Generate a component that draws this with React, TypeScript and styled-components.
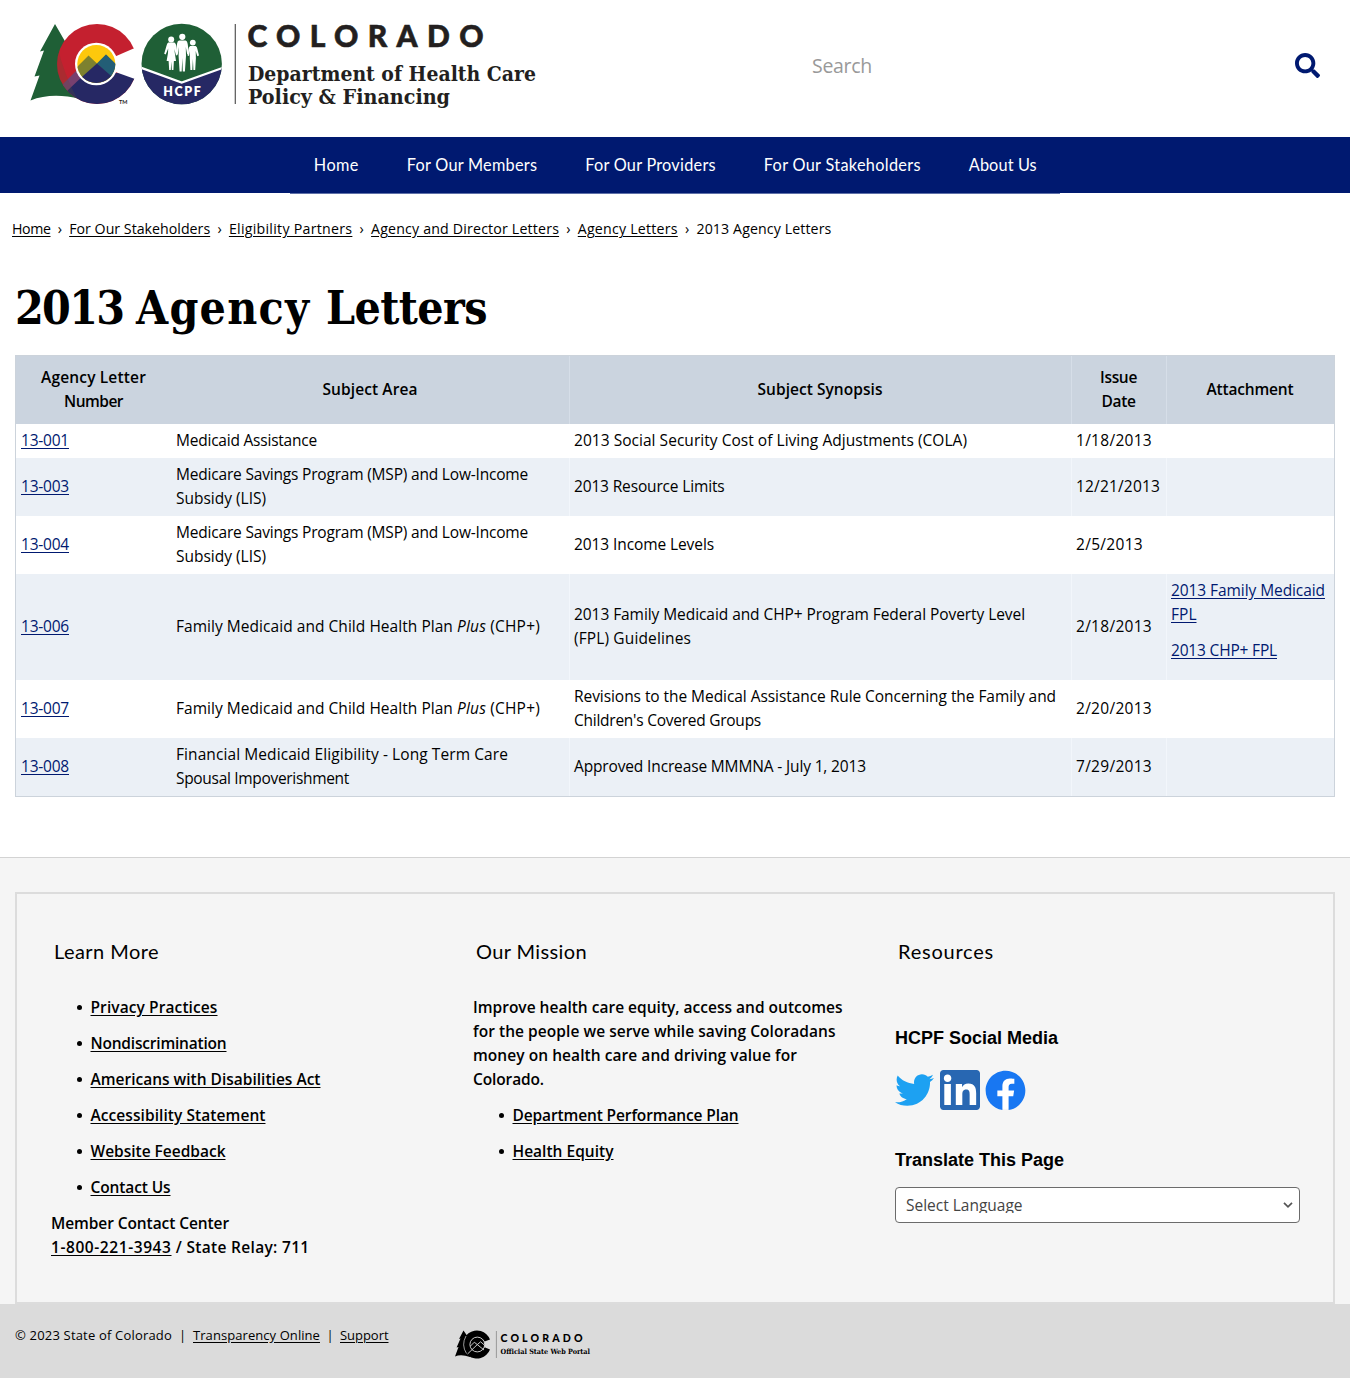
import React, { useLayoutEffect, useRef, useState } from "react";
import styled, { createGlobalStyle, css } from "styled-components";
import { FaFacebook, FaSearch, FaTwitter } from "react-icons/fa";

const sans = `"Open Sans", "Noto Sans", sans-serif`;
const lato = `Lato, "Open Sans", sans-serif`;
const slab = `"DejaVu Serif Condensed", "DejaVu Serif", serif`;
const navy = "#001970";

const Global = createGlobalStyle`
  *, *::before, *::after { box-sizing: border-box; }
  body { margin: 0; background: #fff; color: #000; font: 15.5px/24px ${sans}; }
  h1, h2, h3, p, ul { margin: 0; padding: 0; }
  a { color: inherit; text-underline-offset: 2px; }
`;

const FitSpan = styled.span`
  white-space: pre;
`;

/* Spreads a run of text evenly over the given width. */
function Fit({ w, children }: { w: number; children: string }) {
  const ref = useRef<HTMLSpanElement>(null);
  const [spacing, setSpacing] = useState(0);
  useLayoutEffect(() => {
    if (ref.current) {
      setSpacing((w - ref.current.getBoundingClientRect().width) / children.length);
    }
  }, []);
  return (
    <FitSpan ref={ref} style={{ letterSpacing: spacing }}>
      {children}
    </FitSpan>
  );
}

/* ---------- header ---------- */

const Header = styled.header`
  height: 137px;
  padding: 20px 30px 0;
  display: flex;
  justify-content: space-between;
`;

const Search = styled.div`
  width: 509px;
  height: 90px;
  display: flex;
  align-items: center;
  justify-content: space-between;
  padding-left: 1px;
  color: #999;
  font-size: 19.5px;
  line-height: 26px;
`;

const SearchLabel = styled.span`
  padding-top: 2px;
`;

const SearchIcon = styled(FaSearch)`
  width: 25px;
  height: 25px;
  color: ${navy};
`;

function StateLogo() {
  return (
    <svg width="520" height="95" viewBox="30 20 520 95" role="img" aria-label="Colorado HCPF">
      <defs>
        <clipPath id="outer"><circle cx="97" cy="64" r="40" /></clipPath>
        <clipPath id="inner"><circle cx="96.3" cy="64" r="19" /></clipPath>
        <clipPath id="seal"><circle cx="181.7" cy="64" r="40.2" /></clipPath>
      </defs>
      <path d="M55 24 L40 51.5 L44 50.5 L34.5 76.5 L39.5 75.5 L30.5 100.5 Q52 92 80 99 L92 60 L70 50 Z" fill="#1f5f36" />
      <g clipPath="url(#outer)">
        <rect x="56" y="22" width="84" height="84" fill="#c4202f" />
        <path d="M78 69 L61 86 L67 93 L86 74 Z" fill="#78406f" />
        <path d="M66 92 L86 73 L140 73 L140 110 L66 110 Z" fill="#262864" />
        <path d="M55 34 Q61 70 79 102 L50 110 L50 34 Z" fill="#5a4a34" opacity=".25" />
      </g>
      <path d="M114 57 L133.6 48.6 L142 50 L142 80 L133.6 78.6 L114 71.6 Z" fill="#fff" />
      <circle cx="96.3" cy="64" r="21.3" fill="#fff" />
      <g clipPath="url(#inner)">
        <rect x="76" y="44" width="42" height="42" fill="#fdc80c" />
        <path d="M72 72 L88.5 55.5 L97 63.5 L106 54.5 L122 70 L122 90 L72 90 Z" fill="#7d812f" />
        <path d="M97 63.5 L106 54.5 L122 70 L122 84 L116 82 Z" fill="#235e76" />
        <path d="M74 84 L97 63.5 L118 82 L118 90 L74 90 Z" fill="#262864" />
      </g>
      <text x="119" y="103.5" fontSize="5.5" fontFamily={lato} fontWeight="700" fill="#222">TM</text>

      <g clipPath="url(#seal)">
        <rect x="141" y="23" width="82" height="82" fill="#1f5f36" />
        <path d="M140 67.5 L181.7 83 L224 67.5 L224 106 L140 106 Z" fill="#262864" />
        <path d="M139 67 L181.7 82.6 L225 67" fill="none" stroke="#fff" strokeWidth="2.2" />
      </g>
      <g fill="#fff">
        <circle cx="171.2" cy="39.4" r="3" />
        <path d="M168.3 42.5 H174.2 Q176 43 176.5 47 L177.6 55 L176 55.4 L174.4 49 L174.8 53 L176 61 H173.9 L173.4 70 H171.8 L171.3 61.5 L170.8 70 H169.2 L168.6 61 H166.6 L168 53 L168.2 48.5 L165.7 54.5 L164.2 53.8 L166.3 46.5 Q167 43 168.3 42.5 Z" />
        <circle cx="182.3" cy="36.8" r="3.1" />
        <path d="M179 40.6 H185.6 Q187.3 41 187.7 44 L189 54 L187.2 54.3 L185.8 47 L186 56 L184.9 71.5 H182.8 L182.3 58 L181.7 71.5 H179.6 L178.6 56 L178.8 47 L177.8 54.3 L176 54 L177 44 Q177.4 41 179 40.6 Z" />
        <circle cx="192.8" cy="42.6" r="2.9" />
        <path d="M190.2 46 H195.6 Q197 46.4 197.4 49 L199 55.5 L197.3 56.3 L195.7 51 L195.9 58 L195.2 70 H193.4 L192.9 59 L192.3 70 H190.4 L189.8 58 L190 51 L189 56 L187.5 55.5 L188.6 49 Q189 46.4 190.2 46 Z" />
      </g>
      <text x="163.3" y="95.7" textLength="37.5" fontSize="12.4" fontFamily={lato} fontWeight="800" fill="#fff">HCPF</text>

      <path d="M235.3 24 V104" stroke="#555" strokeWidth="1.2" />
      <g fill="#231f20">
        <text x="247.5" y="46.7" textLength="236" fontSize="30" fontFamily={lato} fontWeight="900" stroke="#231f20" strokeWidth=".6">COLORADO</text>
        <text x="248" y="80.6" textLength="288" lengthAdjust="spacingAndGlyphs" fontSize="20.8" fontFamily={slab} fontWeight="700">Department of Health Care</text>
        <text x="248" y="104" textLength="202" lengthAdjust="spacingAndGlyphs" fontSize="20.8" fontFamily={slab} fontWeight="700">Policy &amp; Financing</text>
      </g>
    </svg>
  );
}

/* ---------- navigation ---------- */

const Nav = styled.nav`
  height: 56px;
  background: ${navy};
  display: flex;
  justify-content: center;
`;

const Menu = styled.div`
  height: 57px;
  display: flex;
  border-bottom: 1px solid #5f70a8;
`;

const MenuItem = styled.a`
  padding: 0 23.7px 0 24.3px;
  line-height: 56px;
  color: #fff;
  font-family: ${lato};
  font-size: 16.3px;
`;

const Crumbs = styled.div`
  padding: 24px 12px 0;
  height: 92px;
  display: flex;
  font-size: 14.2px;
`;

const CrumbSep = styled.span`
  width: 18.7px;
  text-align: center;
`;

const Title = styled.h1`
  height: 70px;
  padding-left: 15px;
  line-height: 47px;
  font-family: ${slab};
  font-size: 46px;
  font-weight: 700;
`;

/* ---------- table ---------- */

const Table = styled.table`
  width: 1320px;
  margin: 0 15px;
  table-layout: fixed;
  border: 1px solid #ccd3db;
  border-collapse: separate;
  border-spacing: 0;
`;

const Col = styled.col<{ $w: number }>`
  width: ${(p) => p.$w}px;
`;

const divider = css`
  &:nth-child(n + 3) {
    border-left: 1px solid #d6dee8;
    padding-left: 4px;
  }
`;

const Th = styled.th`
  height: 68px;
  padding: 0 5px 2px;
  background: #cbd4df;
  font-weight: 600;
  ${divider}
`;

const Tr = styled.tr<{ $h: number }>`
  height: ${(p) => p.$h}px;
  &:nth-child(even) {
    background: #ebf0f6;
  }
`;

const Td = styled.td`
  padding: 0 5px 2px;
  vertical-align: middle;
  &:nth-child(n + 3) {
    border-left: 1px solid transparent;
    padding-left: 4px;
  }
  ${Tr}:nth-child(even) &:nth-child(n + 3) {
    border-left-color: #f2f6fb;
  }
`;

const Link = styled.a`
  color: ${navy};
  text-decoration: underline;
`;

const Attachments = styled.div`
  display: flex;
  flex-direction: column;
  gap: 12px;
  padding-bottom: 12px;
`;

/* ---------- footer ---------- */

const Footer = styled.footer`
  margin-top: 60px;
  padding: 34px 15px 0;
  background: #f5f5f5;
  border-top: 1px solid #d3d3d3;
`;

const Panel = styled.div`
  height: 412px;
  padding: 45px 34px 0;
  border: 2px solid #dcdcdc;
  display: grid;
  grid-template-columns: 422px 422px 405px;
`;

const Heading = styled.h2`
  height: 56px;
  padding-left: 3px;
  font: 400 20px/24px ${lato};
`;

const Strong = styled.p`
  font-weight: 600;
`;

const List = styled.ul<{ $top?: number }>`
  padding: ${(p) => p.$top ?? 0}px 0 0 26px;
  font-weight: 600;
  list-style: none;
`;

const Item = styled.li`
  display: flex;
  align-items: center;
  margin-bottom: 12px;
  &::before {
    content: "";
    width: 5px;
    height: 5px;
    margin: 1px 8.5px 0 0;
    border-radius: 50%;
    background: #000;
  }
`;

const Sub = styled.h3<{ $top: number }>`
  margin-top: ${(p) => p.$top}px;
  font: 700 18px/24px "Liberation Sans", Arial, sans-serif;
`;

const Social = styled.div`
  display: flex;
  gap: 5px;
  margin-top: 20px;
  height: 40px;
`;

const Twitter = styled(FaTwitter)`
  width: 39px;
  height: 40px;
  margin-right: 1px;
  color: #1da1f2;
`;

const Facebook = styled(FaFacebook)`
  width: 41px;
  height: 41px;
  margin-left: -0.5px;
  color: #1877f2;
  background: radial-gradient(circle, #fff 18px, transparent 18.5px);
`;

const Select = styled.div`
  margin-top: 15px;
  width: 405px;
  height: 36px;
  padding: 0 6px 0 10px;
  display: flex;
  align-items: center;
  justify-content: space-between;
  background: #fff;
  border: 1px solid #6b6b6b;
  border-radius: 4px;
  color: #444;
`;

const SelectLabel = styled.span`
  height: 16px;
  line-height: 16px;
  overflow: hidden;
`;

const Legal = styled.div`
  height: 74px;
  padding: 19px 15px 0;
  display: flex;
  background: #dbdbdb;
  font-size: 13px;
`;

const Copyright = styled.div`
  width: 438px;
`;

const PortalMark = styled.svg`
  margin-top: 6px;
`;

function PortalLogo() {
  return (
    <PortalMark width="140" height="32" viewBox="453 1329 140 32" role="img" aria-label="Colorado Official State Web Portal">
      <path d="M463.5 1330.5 L459 1339 L460.5 1338.6 L456.6 1347.5 L458.5 1347 L455 1356.5 Q461 1354 470 1357 V1340 Z" fill="#000" />
      <path d="M490 1339.5 A14 14 0 1 0 490 1349.5 L484.6 1347.3 A8 8 0 0 1 470 1344.5 A8 8 0 0 1 484.6 1341.5 Z" fill="#000" />
      <circle cx="477.3" cy="1344.5" r="7.4" fill="#000" stroke="#dbdbdb" strokeWidth=".9" />
      <path d="M467.5 1354 L477.3 1344.6 L484 1350 M470.5 1346 L474.3 1342.2 L477.3 1344.6 L480.6 1341.8 L484.5 1345.2" fill="none" stroke="#dbdbdb" strokeWidth=".9" />
      <path d="M466 1336 Q461 1345 466.5 1353.5" fill="none" stroke="#dbdbdb" strokeWidth=".7" />
      <path d="M496.4 1331 V1358" stroke="#888" strokeWidth=".8" />
      <text x="500.5" y="1342.4" textLength="82" fontSize="10.6" fontFamily={lato} fontWeight="900">COLORADO</text>
      <text x="500.5" y="1354" textLength="89.5" lengthAdjust="spacingAndGlyphs" fontSize="7.2" fontFamily={slab} fontWeight="700">Official State Web Portal</text>
    </PortalMark>
  );
}

type Run = [string, number];

const menu: Run[] = [["Home", 45], ["For Our Members", 130.4], ["For Our Providers", 130.6], ["For Our Stakeholders", 157], ["About Us", 68]];

const crumbs: Run[] = [["Home", 38.5], ["For Our Stakeholders", 141], ["Eligibility Partners", 123.5], ["Agency and Director Letters", 188], ["Agency Letters", 100], ["2013 Agency Letters", 135]];

const heads: Run[][] = [
  [["Agency Letter", 105], ["Number", 59]],
  [["Subject Area", 95]],
  [["Subject Synopsis", 125]],
  [["Issue", 37], ["Date", 34]],
  [["Attachment", 87]],
];

const medicare: Run[] = [["Medicare Savings Program (MSP) and Low-Income", 352], ["Subsidy (LIS)", 90]];

interface Letter {
  id: string;
  height: number;
  area: Run[] | null;
  synopsis: Run[];
  date: Run;
  files?: Run[][];
}

const letters: Letter[] = [
  { id: "13-001", height: 34, area: [["Medicaid Assistance", 141]], synopsis: [["2013 Social Security Cost of Living Adjustments (COLA)", 393]], date: ["1/18/2013", 76] },
  { id: "13-003", height: 58, area: medicare, synopsis: [["2013 Resource Limits", 150.5]], date: ["12/21/2013", 84] },
  { id: "13-004", height: 58, area: medicare, synopsis: [["2013 Income Levels", 140]], date: ["2/5/2013", 67] },
  { id: "13-006", height: 106, area: null, synopsis: [["2013 Family Medicaid and CHP+ Program Federal Poverty Level", 451], ["(FPL) Guidelines", 117]], date: ["2/18/2013", 76], files: [[["2013 Family Medicaid", 154], ["FPL", 25.5]], [["2013 CHP+ FPL", 106]]] },
  { id: "13-007", height: 58, area: null, synopsis: [["Revisions to the Medical Assistance Rule Concerning the Family and", 482], ["Children's Covered Groups", 187]], date: ["2/20/2013", 76] },
  { id: "13-008", height: 58, area: [["Financial Medicaid Eligibility - Long Term Care", 332], ["Spousal Impoverishment", 173]], synopsis: [["Approved Increase MMMNA - July 1, 2013", 292]], date: ["7/29/2013", 76] },
];

const learnMore: Run[] = [["Privacy Practices", 127], ["Nondiscrimination", 136], ["Americans with Disabilities Act", 230], ["Accessibility Statement", 175], ["Website Feedback", 135], ["Contact Us", 80]];

const mission: Run[] = [["Improve health care equity, access and outcomes", 369.5], ["for the people we serve while saving Coloradans", 362.5], ["money on health care and driving value for", 324], ["Colorado.", 71]];

const missionLinks: Run[] = [["Department Performance Plan", 226], ["Health Equity", 101]];

function Lines({ runs }: { runs: Run[] }) {
  return (
    <>
      {runs.map(([text, w], i) => (
        <React.Fragment key={text}>
          {i > 0 && <br />}
          <Fit w={w}>{text}</Fit>
        </React.Fragment>
      ))}
    </>
  );
}

function LinkList({ runs, top }: { runs: Run[]; top?: number }) {
  return (
    <List $top={top}>
      {runs.map(([text, w]) => (
        <Item key={text}><a href="#"><Fit w={w}>{text}</Fit></a></Item>
      ))}
    </List>
  );
}

export default function App() {
  return (
    <>
      <Global />
      <Header>
        <StateLogo />
        <Search>
          <SearchLabel><Fit w={60}>Search</Fit></SearchLabel>
          <SearchIcon />
        </Search>
      </Header>
      <Nav>
        <Menu>
          {menu.map(([text, w]) => (
            <MenuItem key={text}><Fit w={w}>{text}</Fit></MenuItem>
          ))}
        </Menu>
      </Nav>
      <Crumbs>
        {crumbs.map(([text, w], i) => (
          <React.Fragment key={text}>
            {i > 0 && <CrumbSep>›</CrumbSep>}
            {i < crumbs.length - 1 ? <a href="#"><Fit w={w}>{text}</Fit></a> : <Fit w={w}>{text}</Fit>}
          </React.Fragment>
        ))}
      </Crumbs>
      <Title>
        <Fit w={121}>{"2013 "}</Fit>
        <Fit w={190}>{"Agency "}</Fit>
        <Fit w={161}>Letters</Fit>
      </Title>
      <Table>
        <colgroup>
          {[155, 398, 502, 95, 168].map((w) => <Col key={w} $w={w} />)}
        </colgroup>
        <thead>
          <tr>{heads.map((runs) => <Th key={runs[0][0]}><Lines runs={runs} /></Th>)}</tr>
        </thead>
        <tbody>
          {letters.map((l) => (
            <Tr key={l.id} $h={l.height}>
              <Td><Link href="#"><Fit w={48}>{l.id}</Fit></Link></Td>
              <Td>
                {l.area ? <Lines runs={l.area} /> : (
                  <>
                    <Fit w={281}>{"Family Medicaid and Child Health Plan "}</Fit>
                    <em><Fit w={29}>Plus</Fit></em>
                    <Fit w={54}>{" (CHP+)"}</Fit>
                  </>
                )}
              </Td>
              <Td><Lines runs={l.synopsis} /></Td>
              <Td><Fit w={l.date[1]}>{l.date[0]}</Fit></Td>
              <Td>
                {l.files && (
                  <Attachments>
                    {l.files.map((runs) => <Link key={runs[0][0]} href="#"><Lines runs={runs} /></Link>)}
                  </Attachments>
                )}
              </Td>
            </Tr>
          ))}
        </tbody>
      </Table>
      <Footer>
        <Panel>
          <section>
            <Heading><Fit w={105}>Learn More</Fit></Heading>
            <LinkList runs={learnMore} />
            <Strong>
              <Fit w={178}>Member Contact Center</Fit><br />
              <a href="#"><Fit w={120.5}>1-800-221-3943</Fit></a><Fit w={138}>{" / State Relay: 711"}</Fit>
            </Strong>
          </section>
          <section>
            <Heading><Fit w={111}>Our Mission</Fit></Heading>
            <Strong><Lines runs={mission} /></Strong>
            <LinkList runs={missionLinks} top={12} />
          </section>
          <section>
            <Heading><Fit w={96}>Resources</Fit></Heading>
            <Sub $top={31}><Fit w={163}>HCPF Social Media</Fit></Sub>
            <Social>
              <Twitter />
              <svg width="40" height="40" viewBox="0 32 448 448">
                <rect x="20" y="50" width="408" height="410" fill="#fff" />
                <path fill="#2867b2" d="M410 32H38C17 32 0 49 0 70v372c0 21 17 38 38 38h372c21 0 38-17 38-38V70c0-21-17-38-38-38zM122 424H48V190h74V424zM85 166c-24 0-42-18-42-42S61 82 85 82s42 18 42 42-18 42-42 42zm320 258h-73V309c0-27-1-58-38-58-38 0-44 28-44 58v115h-73V190h70v32h1c10-19 34-38 69-38 74 0 88 49 88 112V424z" />
              </svg>
              <Facebook />
            </Social>
            <Sub $top={38}><Fit w={169}>Translate This Page</Fit></Sub>
            <Select>
              <SelectLabel><Fit w={116.5}>Select Language</Fit></SelectLabel>
              <svg width="10" height="8" viewBox="0 0 10 8"><path d="M1 1.8 L5 5.8 L9 1.8" fill="none" stroke="#555" strokeWidth="1.7" /></svg>
            </Select>
          </section>
        </Panel>
      </Footer>
      <Legal>
        <Copyright>
          <Fit w={157}>© 2023 State of Colorado</Fit>
          <Fit w={21}>{"  |  "}</Fit>
          <a href="#"><Fit w={127}>Transparency Online</Fit></a>
          <Fit w={20}>{"  |  "}</Fit>
          <a href="#"><Fit w={48.5}>Support</Fit></a>
        </Copyright>
        <PortalLogo />
      </Legal>
    </>
  );
}
